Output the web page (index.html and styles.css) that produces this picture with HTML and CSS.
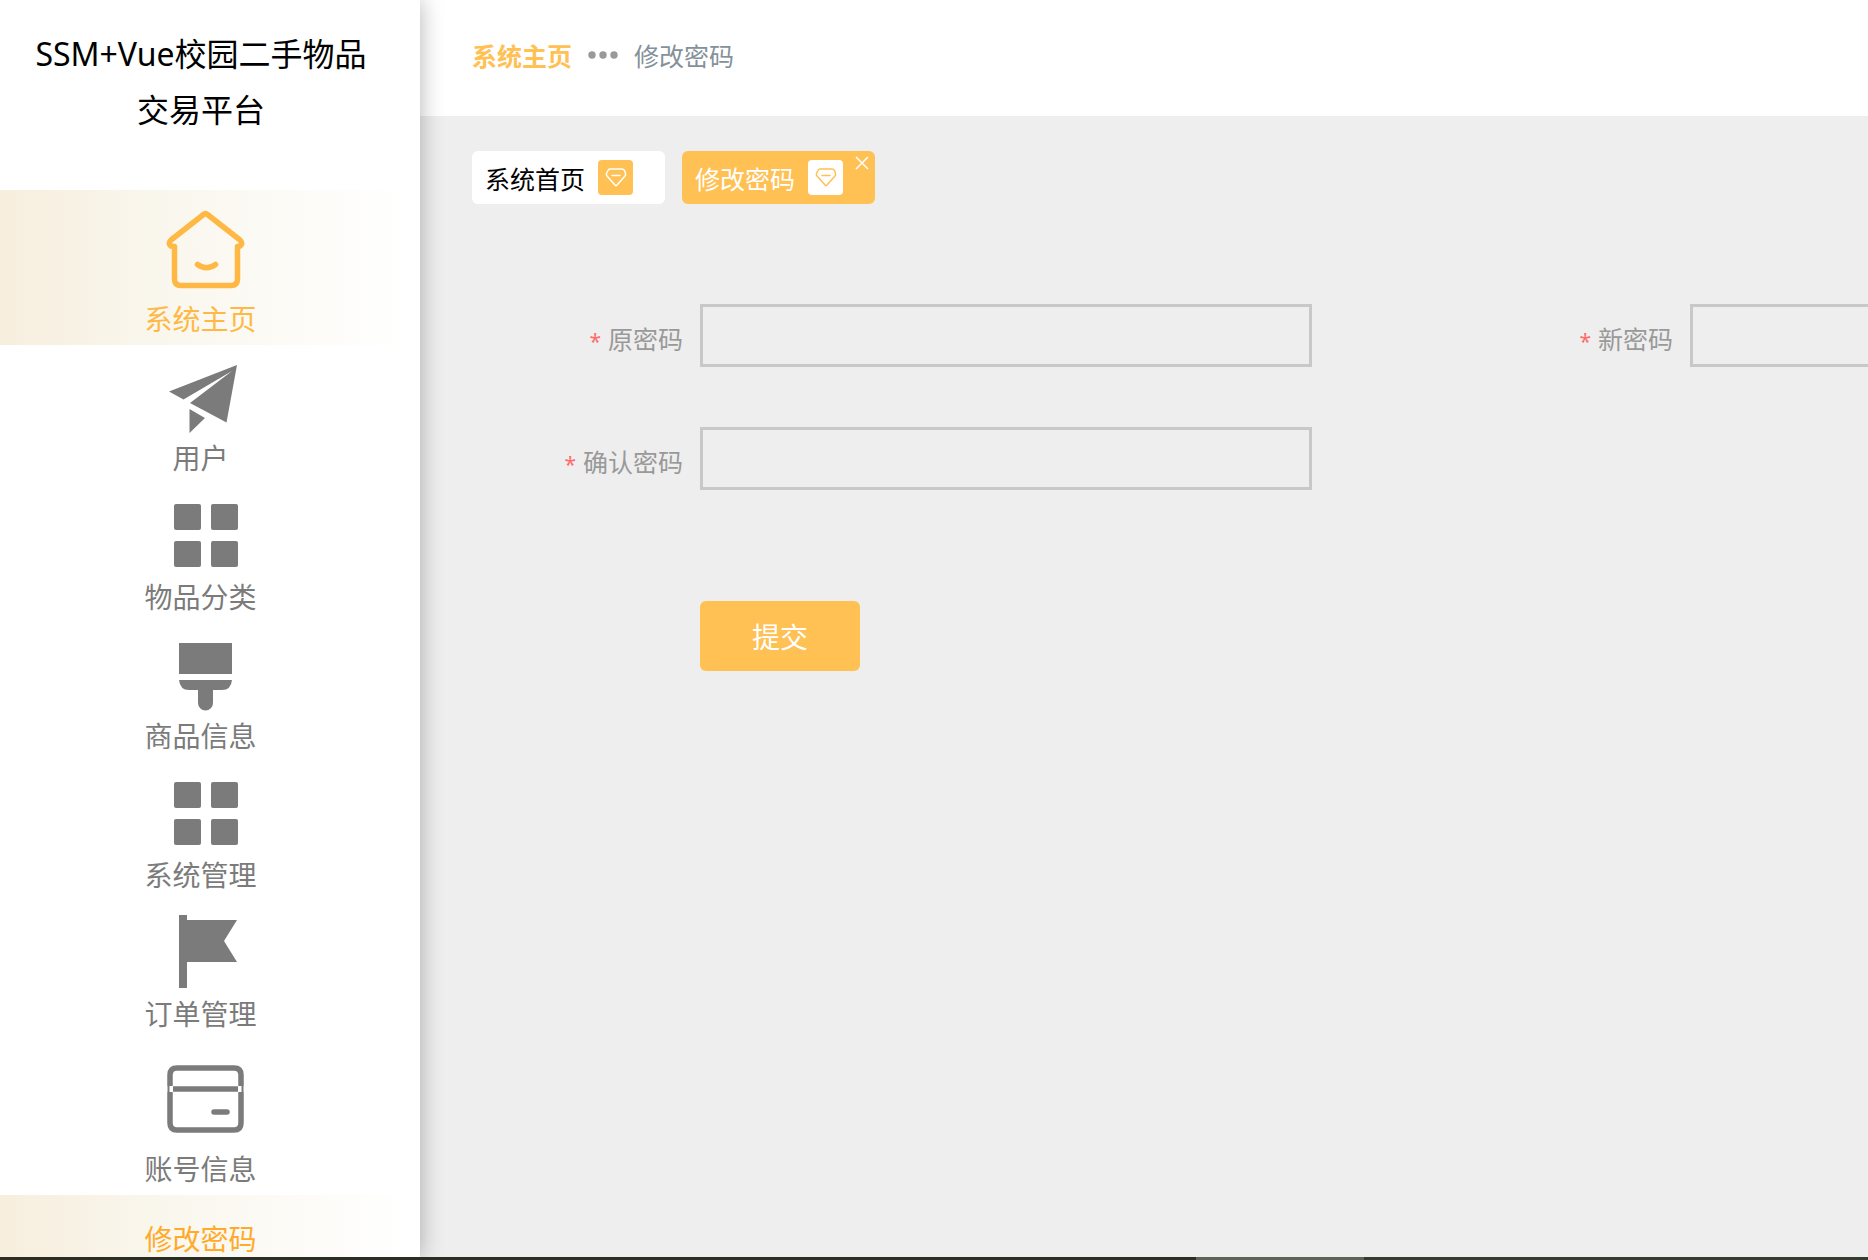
FILE: index.html
```
<!DOCTYPE html>
<html lang="zh-CN">
<head>
  <meta charset="UTF-8">
  <title>修改密码</title>
  <link rel="stylesheet" href="styles.css">
</head>
<body>

  <div class="app">
    <aside class="sidebar">
      <h1 class="title">SSM+Vue校园二手物品交易平台</h1>
      <nav class="menu">
        <a href="#" class="menu-item active">
          <svg class="icon-large" viewBox="0 0 93 93" fill="none" stroke="currentColor" stroke-width="5.500" stroke-linecap="round" stroke-linejoin="round">
            <path d="M15.500 43.500h-1c-4.500 0-5.500-4-2.500-6.500L44.500 11.500q2-1.800 4 0L81 37c3 2.500 2 6.500-2.500 6.500V76q0 6.500-6.500 6.500h-50Q15.500 82.500 15.500 76z"/>
            <path d="M38.500 61.500q9 6.500 18 0"/>
          </svg>
          <span>系统主页</span>
        </a>
        <a href="#" class="menu-item">
          <svg class="icon" viewBox="0 0 77 77" fill="currentColor">
            <path d="M2 33.500 70 7 59.500 64.500 23 45 65 13 16.500 41.500z"/>
            <path d="M22.500 51 38 60 22.500 75z"/>
          </svg>
          <span>用户</span>
        </a>
        <a href="#" class="menu-item">
          <svg class="icon" viewBox="0 0 77 77" fill="currentColor">
            <rect x="7" y="7" width="27" height="26" rx="2"/>
            <rect x="44" y="7" width="27" height="26" rx="2"/>
            <rect x="7" y="44" width="27" height="26" rx="2"/>
            <rect x="44" y="44" width="27" height="26" rx="2"/>
          </svg>
          <span>物品分类</span>
        </a>
        <a href="#" class="menu-item">
          <svg class="icon" viewBox="0 0 77 77" fill="currentColor">
            <path d="M12 7h53v31H12z"/>
            <path d="M12 44h53q-1 10-10 10h-9v13a7.500 7.500 0 0 1-15 0V54h-9q-9 0-10-10z"/>
          </svg>
          <span>商品信息</span>
        </a>
        <a href="#" class="menu-item">
          <svg class="icon" viewBox="0 0 77 77" fill="currentColor">
            <rect x="7" y="7" width="27" height="26" rx="2"/>
            <rect x="44" y="7" width="27" height="26" rx="2"/>
            <rect x="7" y="44" width="27" height="26" rx="2"/>
            <rect x="44" y="44" width="27" height="26" rx="2"/>
          </svg>
          <span>系统管理</span>
        </a>
        <a href="#" class="menu-item">
          <svg class="icon" viewBox="0 0 77 77" fill="currentColor">
            <path d="M12 1h8v5h50L57 27l13 21H20v26h-8z"/>
          </svg>
          <span>订单管理</span>
        </a>
        <a href="#" class="menu-item">
          <svg class="icon-large" viewBox="0 0 93 93" fill="none" stroke="currentColor" stroke-width="5.500">
            <path d="M11 33V22q0-7 7-7h57q7 0 7 7v11M11 39v31q0 7 7 7h57q7 0 7-7V39"/>
            <path d="M9.500 33v6M83.500 33v6" stroke-width="2"/>
            <path d="M14 36h65"/>
            <path d="M55 59h13" stroke-linecap="round"/>
          </svg>
          <span>账号信息</span>
        </a>
        <a href="#" class="submenu-item">修改密码</a>
      </nav>
    </aside>

    <main class="main">
      <header class="header">
        <a href="#" class="crumb-home">系统主页</a>
        <svg class="dots" viewBox="0 0 30 8" fill="currentColor">
          <circle cx="4" cy="4" r="3.700"/>
          <circle cx="15" cy="4" r="3.700"/>
          <circle cx="26" cy="4" r="3.700"/>
        </svg>
        <span>修改密码</span>
      </header>

      <div class="content">
        <div class="tabs">
          <a href="#" class="tab">
            系统首页
            <svg class="tab-icon" viewBox="0 0 35 35" fill="none" stroke="currentColor" stroke-width="1.500" stroke-linecap="round" stroke-linejoin="round">
              <path d="M12 9h12q1.500 0 2.500 1.500l1 3q.5 1.500-.5 2.500l-8 9q-1 1.200-2 0l-8-9q-1-1-.5-2.500l1.500-3Q10.500 9 12 9zM14 15.500h8"/>
            </svg>
          </a>
          <div class="tab tab-active">
            修改密码
            <svg class="tab-icon" viewBox="0 0 35 35" fill="none" stroke="currentColor" stroke-width="1.500" stroke-linecap="round" stroke-linejoin="round">
              <path d="M12 9h12q1.500 0 2.500 1.500l1 3q.5 1.500-.5 2.500l-8 9q-1 1.200-2 0l-8-9q-1-1-.5-2.500l1.500-3Q10.500 9 12 9zM14 15.500h8"/>
            </svg>
            <button type="button" class="tab-close" aria-label="关闭">
              <svg viewBox="0 0 14 14" fill="none" stroke="currentColor" stroke-width="1.500"><path d="M1 1l12 12M13 1L1 13"/></svg>
            </button>
          </div>
        </div>

        <form class="form">
          <div class="field">
            <label for="oldPassword"><span class="required">*</span>原密码</label>
            <input type="password" id="oldPassword">
          </div>
          <div class="field">
            <label for="newPassword"><span class="required">*</span>新密码</label>
            <input type="password" id="newPassword">
          </div>
          <div class="field">
            <label for="confirmPassword"><span class="required">*</span>确认密码</label>
            <input type="password" id="confirmPassword">
          </div>
          <div class="actions">
            <button type="button" class="submit">提交</button>
          </div>
        </form>
      </div>
    </main>
  </div>

  <div class="bottom-bar"></div>

</body>
</html>
```

FILE: styles.css
```
* {
  box-sizing: border-box;
}

body {
  margin: 0;
  height: 100vh;
  display: flex;
  flex-direction: column;
  overflow: hidden;
  font-family: "Noto Sans", "Noto Sans CJK SC", sans-serif;
  font-size: 25px;
  background: #eee;
}

a {
  color: inherit;
  text-decoration: none;
}

button, input {
  font-family: inherit;
}

.app {
  flex: 1;
  min-height: 0;
  display: flex;
}

/* sidebar */
.sidebar {
  flex: none;
  width: 420px;
  overflow: hidden;
  background: #fff;
  box-shadow: 0 0 22px rgba(0, 0, 0, 0.3);
  z-index: 1;
}

.title {
  margin: 0;
  padding: 26px 40px 52px 22px;
  font-size: 32px;
  font-weight: 400;
  line-height: 56px;
  text-align: center;
  color: #000;
}

.menu-item, .submenu-item {
  display: flex;
  flex-direction: column;
  align-items: center;
  padding: 13px 19px 6px 0;
  font-size: 28px;
  line-height: 40px;
  color: #7b7b7b;
}

.icon, .icon-large {
  display: block;
  width: 77px;
  height: 77px;
  margin: 0 0 3px 10px;
}

.icon-large {
  width: 93px;
  height: 93px;
}

.menu-item.active, .submenu-item {
  background: linear-gradient(90deg, #f7eedd, #f9f6ec 35%, #fff 97%);
}

.menu-item.active {
  color: #ffb843;
}

.submenu-item {
  padding-top: 24px;
  padding-bottom: 24px;
  color: #ffaa2a;
}

/* main area */
.main {
  flex: 1;
  min-width: 0;
  overflow: hidden;
}

.header {
  display: flex;
  align-items: center;
  gap: 16px;
  height: 116px;
  padding: 0 52px 6px;
  background: #fff;
  color: #84919a;
}

.crumb-home {
  font-weight: 700;
  color: #ffc054;
}

.dots {
  width: 30px;
  height: 8px;
  color: #999;
}

.content {
  padding: 35px 0 0 52px;
}

.tabs {
  display: flex;
  gap: 17px;
}

.tab {
  position: relative;
  display: flex;
  align-items: center;
  gap: 13px;
  height: 53px;
  padding: 0 32px 0 13px;
  border-radius: 6px;
  background: #fff;
  color: #000;
}

.tab-active {
  background: #ffc054;
  color: #fff;
}

.tab-icon {
  width: 35px;
  height: 35px;
  border-radius: 4px;
  background: #ffc054;
  color: #fff;
}

.tab-active .tab-icon {
  background: #fff;
  color: #ffc054;
}

.tab-close {
  position: absolute;
  top: 5px;
  right: 6px;
  width: 14px;
  height: 14px;
  padding: 0;
  border: none;
  background: none;
  color: #fff;
  cursor: pointer;
}

.tab-close svg {
  display: block;
}

/* the two columns run past the right edge on smaller windows */
.form {
  display: grid;
  grid-template-columns: repeat(2, minmax(990px, 1fr));
  row-gap: 53px;
  padding-top: 100px;
}

.field {
  display: flex;
  align-items: flex-start;
  padding-right: 150px;
}

.field label {
  width: 228px;
  padding-right: 17px;
  line-height: 70px;
  text-align: right;
  color: #999;
}

.required {
  margin-right: 7px;
  font-size: 21px;
  line-height: 1;
  color: #ff6b6b;
}

.field input {
  flex: 1;
  height: 63px;
  padding: 0 14px;
  border: 3px solid #c8c8c8;
  background: none;
  font-size: 25px;
  color: #999;
  outline: none;
}

.actions {
  grid-column: 1 / -1;
  padding: 51px 0 0 228px;
}

.submit {
  height: 70px;
  padding: 0 52px;
  border: none;
  border-radius: 6px;
  background: #ffc054;
  font-size: 28px;
  color: #fff;
  cursor: pointer;
}

.bottom-bar {
  flex: none;
  height: 3px;
  background: linear-gradient(90deg, #2c2e24 0 64%, #5e6357 64% 73%, #363b30 73%);
  z-index: 2;
}
```
